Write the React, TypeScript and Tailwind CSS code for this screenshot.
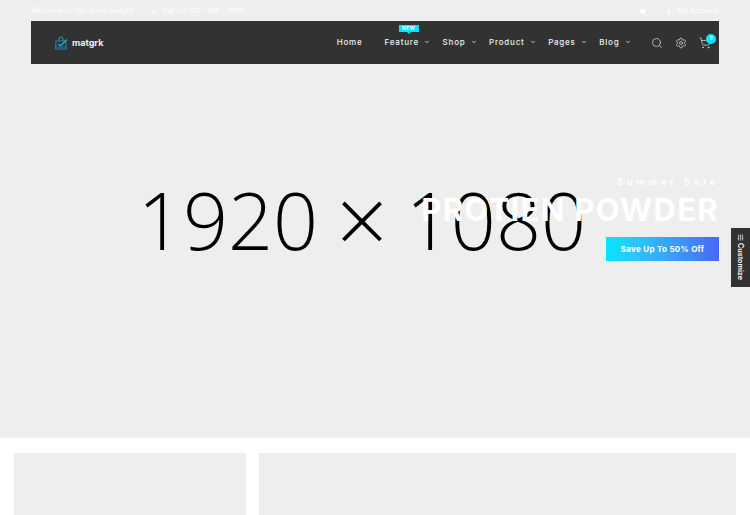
import { Heart, User, Phone, Search, Settings, ShoppingCart, ChevronDown, SlidersHorizontal } from "lucide-react";

const navItems = [
  { label: "Home", hasMenu: false },
  { label: "Feature", hasMenu: true, badge: "NEW" },
  { label: "Shop", hasMenu: true },
  { label: "Product", hasMenu: true },
  { label: "Pages", hasMenu: true },
  { label: "Blog", hasMenu: true },
];

const Logo = () => (
  <div className="flex items-center gap-[3px]">
    <svg width="14" height="14" viewBox="0 0 14 14" fill="none" className="text-[#1d7fa8]">
      <path d="M1 5h9.5l1 8H0.5z" stroke="currentColor" strokeWidth="1.2" />
      <path d="M4 5V3a2 2 0 0 1 4 0v2" stroke="#1fa6b8" strokeWidth="1" />
      <path d="M3.5 8l2 2 6.5-6.5" stroke="#22b8c9" strokeWidth="1.2" />
      <path d="M1 11h10" stroke="#2265a8" strokeWidth="1.4" />
    </svg>
    <span className="text-[9px] font-bold leading-none text-[#eeeeee] font-['Inter',sans-serif]">matgrk</span>
  </div>
);

const App = () => {
  return (
    <div className="relative h-[515px] w-[750px] overflow-hidden bg-white font-['Inter',sans-serif]">
      <section className="relative h-[438px] bg-[#eeeeee]">
        <div className="flex h-full items-center justify-center">
          <span className="mr-[26px] whitespace-nowrap text-[79px] font-light leading-none text-black font-['Open_Sans',sans-serif]">
            1920 <span className="mx-[-3px] align-[-4px] text-[92px] leading-none">×</span> 1080
          </span>
        </div>

        <div className="absolute inset-x-[31px] top-0">
          <div className="flex h-[21px] items-center justify-between pt-[1px] text-[7px] text-white">
            <div className="flex items-center">
              <span className="tracking-[0.2px]">Welcome to Our store matgrk</span>
              <Phone className="ml-[18px] mr-[6px] h-[5px] w-[5px] fill-white" />
              <span className="text-[6.8px]">Call Us: 123 - 456 - 7890</span>
            </div>
            <div className="flex items-center">
              <Heart className="mr-[20px] h-[7px] w-[7px] fill-white" />
              <User className="mr-[5px] h-[6px] w-[6px] fill-white" />
              <span className="tracking-[0.2px]">My Account</span>
            </div>
          </div>

          <nav className="flex h-[43px] items-center justify-between bg-[#323232] pl-[24px] pr-[8px]">
            <Logo />
            <div className="flex items-center">
              <ul className="flex items-center pb-[1px] text-[8px] font-medium tracking-[0.8px] text-[#f0f0f0]">
                {navItems.map((item) => (
                  <li
                    key={item.label}
                    className={`relative flex items-center gap-[5px] ${item.hasMenu ? "mr-[12.5px]" : "mr-[22px]"}`}
                  >
                    {item.badge && (
                      <span className="absolute left-[14px] top-[-11px] w-[20px] bg-[#00e5ff] text-center text-[5px] font-bold leading-[7px] tracking-[0.3px] text-white">
                        {item.badge}
                        <span className="absolute left-[8px] top-[7px] h-0 w-0 border-x-[2px] border-t-[2px] border-x-transparent border-t-[#00e5ff]" />
                      </span>
                    )}
                    <span>{item.label}</span>
                    {item.hasMenu && <ChevronDown className="h-[6px] w-[6px]" strokeWidth={3} />}
                  </li>
                ))}
              </ul>
              <div className="ml-[8px] flex items-center gap-[12px] text-[#d6d6d6]">
                <Search className="h-[12px] w-[12px]" strokeWidth={1.5} />
                <Settings className="h-[12px] w-[12px]" strokeWidth={1.5} />
                <div className="relative">
                  <ShoppingCart className="h-[12px] w-[12px]" strokeWidth={1.5} />
                  <span className="absolute right-[-5px] top-[-3px] flex h-[10px] w-[10px] items-center justify-center rounded-full bg-[#00e5ff] text-[5px] font-bold text-white">
                    2
                  </span>
                </div>
              </div>
            </div>
          </nav>
        </div>

        <div className="absolute right-[31px] top-[175px] flex flex-col items-end">
          <p className="text-[9px] font-bold leading-[14px] tracking-[4px] text-white">Summer Sale</p>
          <h1 className="mt-[3px] text-[31px] font-bold leading-[36px] tracking-[1.3px] text-white">PROTIEN POWDER</h1>
          <button className="mt-[9px] flex h-[24px] w-[113px] items-center justify-center bg-gradient-to-r from-[#00e5ff] to-[#4668f2] text-[8px] font-bold tracking-[0.3px] text-white">
            Save Up To 50% Off
          </button>
        </div>
      </section>

      <section className="grid grid-cols-[232px_477px] gap-[13px] px-[14px] pt-[15px]">
        <div className="h-[62px] bg-[#eeeeee]" />
        <div className="h-[62px] bg-[#eeeeee]" />
      </section>

      <div className="absolute right-0 top-[228px] flex h-[59px] w-[19px] flex-col items-center gap-[2px] bg-[#323232] pt-[6px] text-white">
        <SlidersHorizontal className="h-[7px] w-[7px] rotate-90" />
        <span className="text-[7.2px] font-semibold leading-none [writing-mode:vertical-rl]">Customize</span>
      </div>
    </div>
  );
};

export default App;
